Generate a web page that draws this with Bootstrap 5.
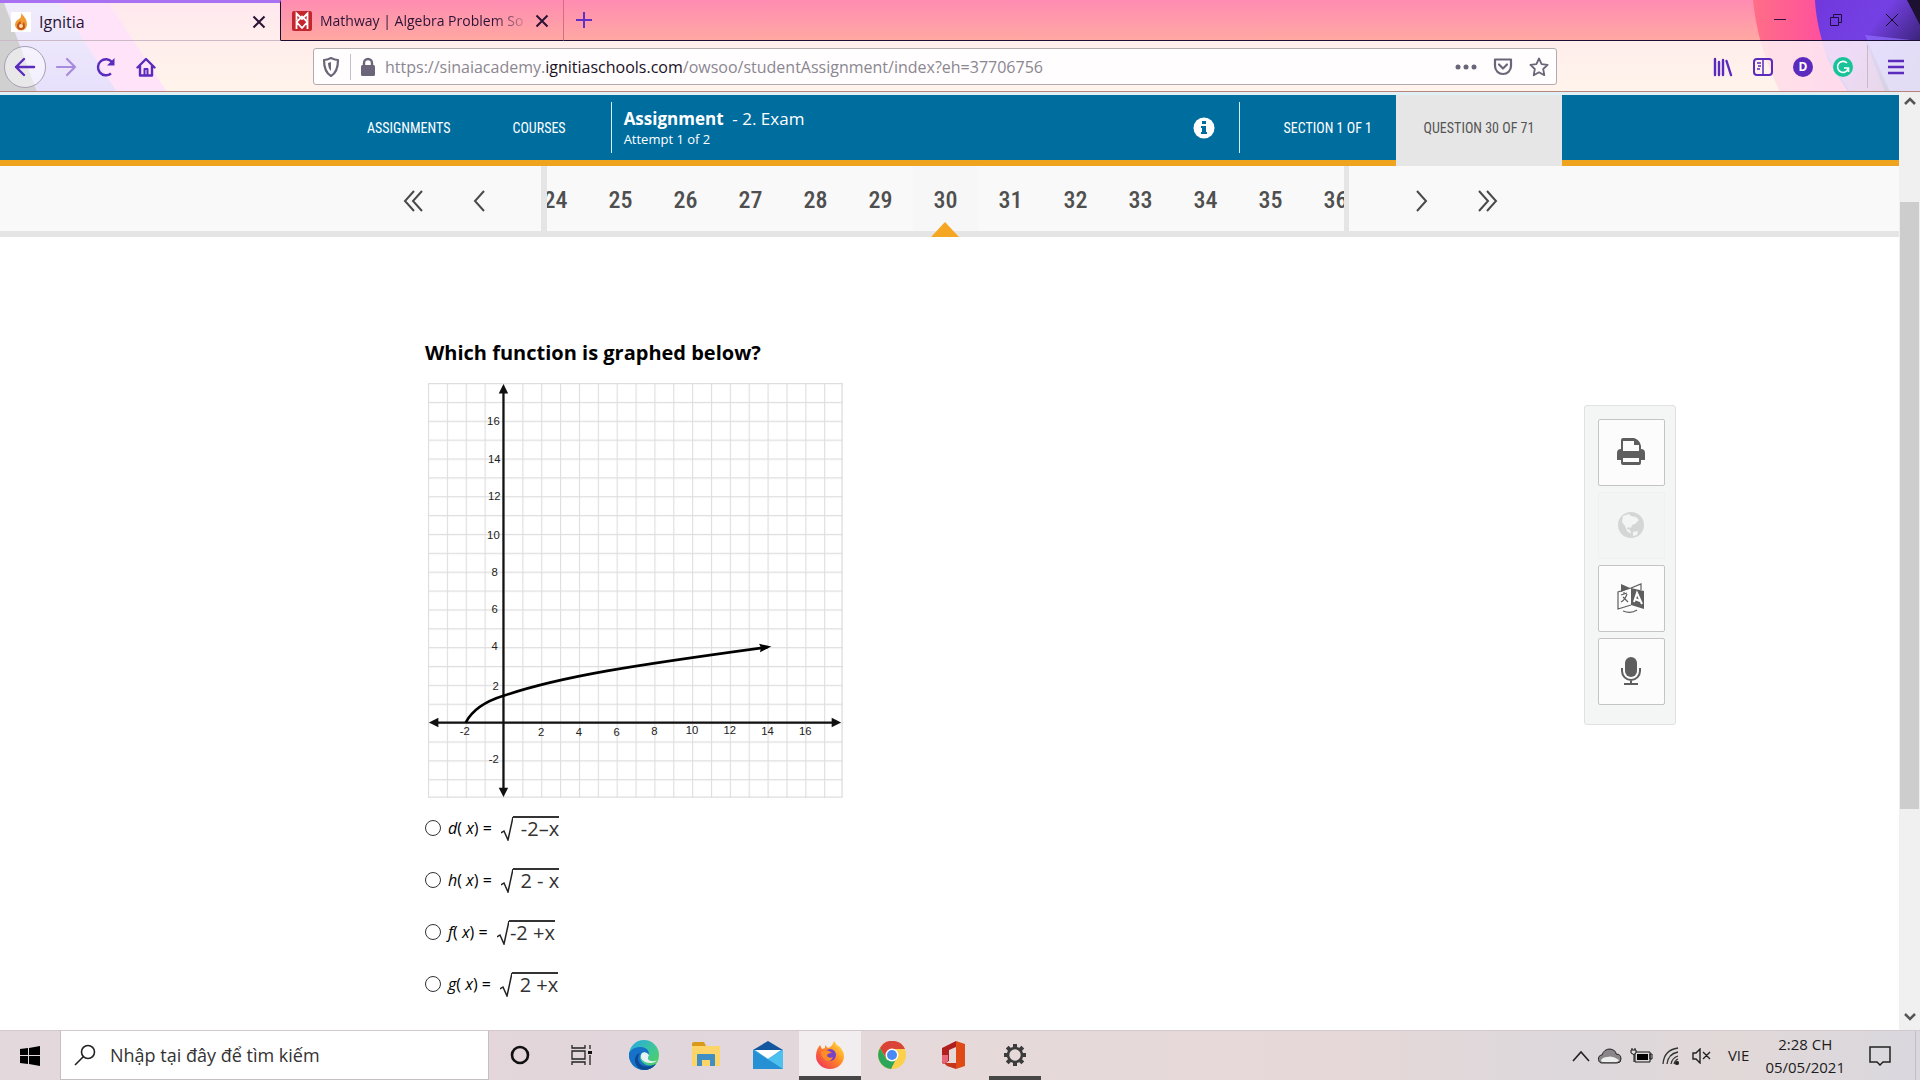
<!DOCTYPE html>
<html lang="en">
<head>
<meta charset="utf-8">
<meta name="viewport" content="width=device-width, initial-scale=1">
<title>Ignitia</title>
<link href="https://cdn.jsdelivr.net/npm/bootstrap@5.3.0/dist/css/bootstrap.min.css" rel="stylesheet">
<style>
  body { font-family: "Open Sans", "Noto Sans", sans-serif; font-size: 16px; line-height: 24px; color: #000; background: #fff; overflow: hidden; }
  svg { display: block; flex: none; }
  button { font: inherit; color: inherit; }
  .plain-btn { background: none; border: 0; padding: 0; display: flex; align-items: center; justify-content: center; }

  /* browser window */
  .chrome-top { background: linear-gradient(#ff8cb2, #ffa9a2 41px, #ffc79c 92px); border-bottom: 1px solid #b9837c; }
  .theme-art { inset: 0; width: 100%; height: 100%; overflow: hidden; }
  .theme-art svg { position: absolute; top: 0; }
  .tab-strip { height: 41px; }
  .tab-item { width: 283px; padding: 2px 14px 0 11px; font-size: 16px; border-bottom: 1px solid #1c0f33; border-right: 1px solid #d66c86; }
  .tab-item.current { width: 281px; padding-top: 0; background: rgba(255,255,255,.8); border-top: 3px solid #a871f2; border-bottom: 1px solid #cbb9c6; border-right: 1px solid #1c0f33; }
  .tab-title { white-space: nowrap; color: #2a1336; }
  .tab-title.fade-end { font-size: 14px; color: transparent; background: linear-gradient(90deg, #2a1336 85%, rgba(42,19,54,.2) 100%); -webkit-background-clip: text; background-clip: text; }
  .strip-rest { border-bottom: 1px solid #1c0f33; }
  .win-btn { width: 56px; height: 40px; }
  .tool-row { height: 50px; background: rgba(255,255,255,.8); color: #5a2bbd; padding: 1px 4px 0 4px; }
  .back-btn { width: 42px; height: 42px; border: 1px solid #a99fb4; border-radius: 50%; background: rgba(255,255,255,.5); }
  .tool-btn { width: 40px; height: 40px; }
  .url-box { height: 37px; border: 1px solid #b3aab0; border-radius: 3px; background: #fffdfd; color: #6c6478; padding: 0 7px 0 6px; margin-left: 147px; margin-right: 146px; }
  .url-rule { width: 1px; height: 26px; background: #c3bdc6; }
  .url-rule.tall { height: 43px; }
  .url-text { font-size: 16px; color: #8b8792; white-space: nowrap; }
  .url-text b { font-weight: 400; color: #1a1126; }

  /* page header */
  .app-head { height: 74px; background: #006d9f; border-top: 3px solid #dff0f7; border-bottom: 6px solid #eea41f; color: #fff; padding-left: 367px; padding-right: 337px; font-family: "Liberation Sans Narrow", "Roboto Condensed", "Liberation Sans", sans-serif; font-size: 14px; }
  .app-head a { color: #fff; text-decoration: none; }
  .courses-link { margin: 0 45px 0 62px; }
  .section-link { margin: 0 24px 0 44px; }
  .head-rule { width: 1px; height: 51px; background: #d9edf6; }
  .head-title { font-family: "Open Sans", sans-serif; font-size: 17px; line-height: 22px; }
  .head-title small { display: block; font-size: 13px; line-height: 18px; }
  .question-tab { background: #e6e6e6; color: #555; width: 166px; height: 71px; padding-bottom: 6px; margin-bottom: -6px; }

  /* question pager */
  .pager { height: 71px; background: #f9f9f9; border-bottom: 6px solid #e5e5e5; padding-left: 380px; color: #4a4a4a; }
  .pager-btn { width: 66px; height: 66px; padding-top: 4px; }
  .pager-window { position: relative; width: 808px; margin: 0 40px 0 29px; }
  .pager-list { border: solid #e5e5e5; border-width: 0 5px 0 6px; overflow: hidden; }
  .pager-list a { flex: 0 0 65px; text-align: center; font: 500 24px/61px "Liberation Sans Narrow", "Roboto Condensed", "Liberation Sans", sans-serif; height: 65px; padding-top: 4px; color: #4f4f4f; text-decoration: none; }
  .pager-list a.current { background: #f7f7f7; }
  .pager-mark { position: absolute; left: 50%; bottom: -6px; transform: translateX(-50%); }

  /* question */
  .question-area { padding: 103px 223px 0 425px; }
  .question-text { font-size: 20px; line-height: 26px; font-weight: 700; margin: 0 0 17px; }
  .graph { margin: 0 0 4px 3px; }
  .option-row { height: 52px; font-size: 16px; }
  .option-row input { appearance: none; width: 16px; height: 16px; margin: 0 7px 0 0; border: 1px solid #333; border-radius: 50%; background: #fff; }
  .option-row input:checked { background: radial-gradient(#333 40%, #fff 45%); }
  .option-row label { display: flex; align-items: center; white-space: pre; }
  .option-row svg { margin-left: 1px; }
  .root-arg { border-top: 2px solid #333; font: 20px/22px "Open Sans", sans-serif; height: 24px; color: #333; min-width: 46px; text-align: right; }
  .tool-box { background: #f4f5f5; border: 1px solid #e0e1e1; border-radius: 3px; width: 92px; height: 320px; padding: 13px 0 0 13px; margin-top: 65px; gap: 6px; }
  .tool-box button { width: 67px; height: 67px; background: #fcfcfc; border: 1px solid #c4c4c4; border-radius: 2px; color: #5e5e5e; padding: 0 2px 2px 0; }
  .tool-box button:disabled { background: #f3f4f4; border-color: #eff0f0; color: #d5d5d5; }

  /* scroll bar */
  .side-scroll { width: 21px; background: #f0f0f0; }
  .side-thumb { width: 19px; background: #cdcdcd; margin-top: 96px; height: 607px; }

  /* task bar */
  .task-bar { height: 50px; background: linear-gradient(90deg, #e3d8dc, #e4d6da 25%, #e0d6dc 35%, #e6d9da 50%, #e6d8d8 70%, #dcd8dc 82%, #e2d8d8 90%, #d9d8de); border-top: 1px solid #d3c9cc; }
  .start-btn { width: 60px; }
  .task-search { width: 429px; background: #fff; border: 1px solid #c4bfc2; border-top: 0; padding-left: 13px; }
  .task-search input { border: 0; outline: 0; background: none; font-size: 18px; color: #333; width: 340px; margin-left: 14px; padding: 0; }
  .task-search input::placeholder { color: #333; opacity: 1; }
  .task-btn { width: 62px; height: 49px; border-bottom: 4px solid transparent; padding-top: 3px; }
  .task-btn.open { background: #f2edef; border-bottom-color: #474747; }
  .task-btn.running { width: 52px; margin: 0 4px; border-bottom-color: #474747; }
  .tray-text { font-size: 15px; line-height: 23px; color: #1c1c1c; }
</style>
<script src="https://cdn.jsdelivr.net/npm/bootstrap@5.3.0/dist/js/bootstrap.bundle.min.js"></script>
</head>
<body>
<div class="vh-100 d-flex flex-column">

  <header class="chrome-top position-relative flex-shrink-0">
    <div class="theme-art position-absolute" aria-hidden="true">
      <svg class="start-0" width="260" height="92">
        <defs><linearGradient id="lav" x2="0" y2="1"><stop offset="0" stop-color="#b9a0ea"/><stop offset="1" stop-color="#8a66f0"/></linearGradient></defs>
        <path d="M107 0L167 92H100L50 0z" fill="#ff7ae0"/>
        <path d="M0 0H58L117 92H0z" fill="url(#lav)"/>
        <path d="M0 0H3L37 92H0z" fill="#18141c"/>
      </svg>
      <svg class="end-0" width="180" height="92">
        <defs>
          <linearGradient id="hot"><stop offset="0" stop-color="#ff6e86"/><stop offset=".5" stop-color="#ff4aa2"/><stop offset="1" stop-color="#ff49a0"/></linearGradient>
          <linearGradient id="vio" y2=".7"><stop offset="0" stop-color="#7138dc"/><stop offset=".5" stop-color="#7440e4"/><stop offset="1" stop-color="#2a1b58"/></linearGradient>
        </defs>
        <path d="M13 0Q17 45 40 92H180V0z" fill="url(#hot)"/>
        <path d="M75 0Q76 25 88 60L108 92H180V0z" fill="url(#vio)"/>
        <path d="M79 41L110 92H145L125 41z" fill="#e254c0" opacity=".5"/>
        <path d="M125 35L150 92H180V41z" fill="#8f6cff" opacity=".7"/>
        <path d="M167 0L180 25V0z" fill="#1c1130"/>
      </svg>
    </div>

    <div class="tab-strip d-flex position-relative">
      <div class="tab-item current d-flex align-items-center">
        <svg width="20" height="20" viewBox="0 0 20 20"><path d="M0 0h20v20H0z" fill="#fff"/><path d="M10 1q6 6 6 11a6 6 0 0 1-12 1q0-4 4-6 3-2 2-6z" fill="#f09a35"/><path d="M10 18a4 4 0 0 1-4-4q0-3 4-5-1 3 1 4l2-3q3 7-3 8z" fill="#c2521d"/><circle cx="10" cy="14" r="2" fill="#ffe1a8"/></svg>
        <span class="tab-title ps-2">Ignitia</span>
        <button class="plain-btn ms-auto" aria-label="Close tab"><svg width="14" height="14" viewBox="0 0 14 14"><path d="M1.500 1.500l11 11M12.500 1.500l-11 11" stroke="#2a1336" stroke-width="2"/></svg></button>
      </div>
      <div class="tab-item d-flex align-items-center">
        <svg width="20" height="20" viewBox="0 0 20 20"><rect width="20" height="20" rx="2" fill="#c4262e"/><path d="M4.500 9V2.500L10 8l5.500-5.500V9M4.500 18v-7L10 17l5.500-6v7M4.500 11L10 5.500 15.500 11" fill="none" stroke="#fff" stroke-width="1.800"/></svg>
        <span class="tab-title fade-end ms-2">Mathway | Algebra Problem So</span>
        <button class="plain-btn ms-auto" aria-label="Close tab"><svg width="14" height="14" viewBox="0 0 14 14"><path d="M1.500 1.500l11 11M12.500 1.500l-11 11" stroke="#2a1336" stroke-width="2"/></svg></button>
      </div>
      <div class="strip-rest d-flex flex-grow-1">
        <button class="plain-btn tool-btn" aria-label="New tab"><svg width="18" height="18" viewBox="0 0 18 18"><path d="M9 1v16M1 9h16" stroke="#5f2fc6" stroke-width="2"/></svg></button>
        <button class="plain-btn win-btn ms-auto" aria-label="Minimize"><svg width="14" height="14"><path d="M1 6.500h12" stroke="#301040"/></svg></button>
        <button class="plain-btn win-btn" aria-label="Restore"><svg width="14" height="14" fill="none" stroke="#1f0c40"><path d="M1.500 4.500h8v8h-8zM4.500 4V1.500h8v8H10"/></svg></button>
        <button class="plain-btn win-btn" aria-label="Close"><svg width="14" height="14"><path d="M1 1l12 12M13 1L1 13" stroke="#120826"/></svg></button>
      </div>
    </div>

    <div class="tool-row d-flex align-items-center position-relative">
      <button class="plain-btn back-btn" aria-label="Back"><svg width="22" height="20" viewBox="0 0 22 20" fill="none" stroke="currentColor" stroke-width="2.400" stroke-linecap="round" stroke-linejoin="round"><path d="M20 10H2M10 2l-8 8 8 8"/></svg></button>
      <button class="plain-btn tool-btn" aria-label="Forward"><svg width="22" height="20" viewBox="0 0 22 20" fill="none" stroke="#a78bdc" stroke-width="2.200" stroke-linecap="round" stroke-linejoin="round"><path d="M2 10h18M12 2l8 8-8 8"/></svg></button>
      <button class="plain-btn tool-btn" aria-label="Reload"><svg width="20" height="20" viewBox="0 0 20 20" fill="none" stroke="currentColor" stroke-width="2.400"><path d="M15 16.500A8 8 0 1 1 16 5"/><path d="M18.500 1v7.500H11z" fill="currentColor" stroke="none"/></svg></button>
      <button class="plain-btn tool-btn" aria-label="Home"><svg width="20" height="20" viewBox="0 0 20 20" fill="none" stroke="currentColor" stroke-width="2.400" stroke-linejoin="round" stroke-linecap="round"><path d="M1.500 10.500L10 2l8.500 8.500M4 9v9.500h12V9"/><path d="M8.500 18v-6h3v6" stroke-width="2"/></svg></button>

      <div class="url-box d-flex align-items-center flex-grow-1">
        <svg width="22" height="22" viewBox="0 0 22 22" fill="none" stroke="currentColor" stroke-width="2.200" stroke-linejoin="round"><path d="M11 2q4 2 7 2 0 12-7 16Q4 16 4 4q3 0 7-2z"/><path d="M11 6v9q-3-3-3-8z" fill="currentColor" stroke="none"/></svg>
        <span class="url-rule ms-2"></span>
        <svg class="ms-2" width="18" height="20" viewBox="0 0 18 20"><rect x="2" y="8" width="14" height="11" rx="1.500" fill="currentColor"/><path d="M5 9V6a4 4 0 0 1 8 0v3" fill="none" stroke="currentColor" stroke-width="2.400"/></svg>
        <span class="url-text ms-2 flex-grow-1">https://sinaiacademy.<b>ignitiaschools.com</b>/owsoo/studentAssignment/index?eh=37706756</span>
        <button class="plain-btn" aria-label="Page actions"><svg width="22" height="6" fill="currentColor"><circle cx="3" cy="3" r="2.500"/><circle cx="11" cy="3" r="2.500"/><circle cx="19" cy="3" r="2.500"/></svg></button>
        <button class="plain-btn ms-3" aria-label="Save to Pocket"><svg width="20" height="18" viewBox="0 0 20 18" fill="none" stroke="currentColor" stroke-width="2.200" stroke-linecap="round" stroke-linejoin="round"><path d="M2 1.500h16V8a8 8 0 0 1-16 0zM6 6.500l4 4 4-4"/></svg></button>
        <button class="plain-btn ms-3" aria-label="Bookmark"><svg width="20" height="20" viewBox="0 0 20 20" fill="none" stroke="currentColor" stroke-width="1.800" stroke-linejoin="round"><path d="M10 1.500l2.600 5.600 6 .7-4.400 4.200 1.100 6.200L10 15.200l-5.300 3 1.100-6.200L1.400 7.800l6-.7z"/></svg></button>
      </div>

      <button class="plain-btn tool-btn" aria-label="Library"><svg width="20" height="20" viewBox="0 0 20 20" stroke="currentColor" stroke-width="2.400" stroke-linecap="round"><path d="M2 2v16M6 5v13M10 3v15M13.500 4l4.500 14"/></svg></button>
      <button class="plain-btn tool-btn" aria-label="Sidebars"><svg width="20" height="18" viewBox="0 0 20 18" fill="none" stroke="currentColor" stroke-width="2"><rect x="1" y="1" width="18" height="16" rx="3"/><path d="M10 1v16M4 5h4M5 8h3M4 11h3" stroke-width="1.500"/></svg></button>
      <button class="plain-btn tool-btn" aria-label="Account"><svg width="20" height="20" viewBox="0 0 20 20"><circle cx="10" cy="10" r="10" fill="currentColor"/><text x="10" y="14" text-anchor="middle" font-size="12" font-weight="700" fill="#fff">D</text></svg></button>
      <button class="plain-btn tool-btn" aria-label="Grammarly"><svg width="20" height="20" viewBox="0 0 20 20"><circle cx="10" cy="10" r="10" fill="#19c39a"/><path d="M14 6a5.500 5.500 0 1 0 1.300 5.500M11 11h4.500v4" fill="none" stroke="#fff" stroke-width="1.600"/></svg></button>
      <span class="url-rule tall ms-1"></span>
      <button class="plain-btn tool-btn ms-2" aria-label="Menu"><svg width="16" height="16" stroke="currentColor" stroke-width="2.400"><path d="M0 2h16M0 8h16M0 14h16"/></svg></button>
    </div>
  </header>

  <div class="d-flex flex-grow-1 overflow-hidden">
    <div class="flex-grow-1 overflow-hidden">
      <nav class="app-head d-flex align-items-center">
        <a href="#">ASSIGNMENTS</a>
        <a href="#" class="courses-link">COURSES</a>
        <span class="head-rule"></span>
        <div class="head-title ms-2 ps-1"><strong>Assignment</strong> &nbsp;- 2. Exam<small>Attempt 1 of 2</small></div>
        <button class="plain-btn ms-auto" aria-label="Information"><svg width="22" height="22" viewBox="0 0 22 22"><circle cx="11" cy="11" r="10.500" fill="#fff"/><path d="M9 4h4v3H9zM8 9h5v6h1v2H8v-2h1v-4H8z" fill="#006d9f"/></svg></button>
        <span class="head-rule ms-4"></span>
        <a href="#" class="section-link">SECTION 1 OF 1</a>
        <div class="question-tab d-flex align-items-center justify-content-center align-self-start">QUESTION 30 OF 71</div>
      </nav>

      <nav class="pager d-flex" aria-label="Questions">
        <button class="plain-btn pager-btn" aria-label="First"><svg width="20" height="22" fill="none" stroke="currentColor" stroke-width="2"><path d="M11 1L2 11l9 10M19 1l-9 10 9 10"/></svg></button>
        <button class="plain-btn pager-btn" aria-label="Previous"><svg width="12" height="22" fill="none" stroke="currentColor" stroke-width="2"><path d="M11 1L2 11l9 10"/></svg></button>
        <div class="pager-window">
          <div class="pager-list d-flex justify-content-center">
            <a href="#">24</a><a href="#">25</a><a href="#">26</a><a href="#">27</a><a href="#">28</a><a href="#">29</a><a href="#" class="current">30</a><a href="#">31</a><a href="#">32</a><a href="#">33</a><a href="#">34</a><a href="#">35</a><a href="#">36</a>
          </div>
          <svg class="pager-mark" width="28" height="15"><path d="M0 15L14 0l14 15z" fill="#f5a623"/></svg>
        </div>
        <button class="plain-btn pager-btn" aria-label="Next"><svg width="12" height="22" fill="none" stroke="currentColor" stroke-width="2"><path d="M1 1l9 10-9 10"/></svg></button>
        <button class="plain-btn pager-btn" aria-label="Last"><svg width="20" height="22" fill="none" stroke="currentColor" stroke-width="2"><path d="M1 1l9 10-9 10M9 1l9 10-9 10"/></svg></button>
      </nav>

      <main class="question-area d-flex justify-content-between align-items-start">
        <form>
          <h1 class="question-text">Which function is graphed below?</h1>
          <svg class="graph" width="415" height="415" viewBox="0 0 440 440" role="img" aria-label="Square root curve starting at (-2, 0)">
            <defs><pattern id="cells" width="20" height="20" patternUnits="userSpaceOnUse"><path d="M0 0H20M0 0V20" stroke="#dedede" stroke-width="2.400" fill="none"/></pattern></defs>
            <rect width="440" height="440" fill="url(#cells)"/>
            <path d="M439 0V439H0" fill="none" stroke="#dedede" stroke-width="1.400"/>
            <g stroke="#111" stroke-width="2.400" fill="#111">
              <path d="M6 360H434M80 6V434"/>
              <path stroke="none" d="M1 360l10-5v10zM438 360l-10-5v10zM80 1l-5 10h10zM80 439l-5-10h10z"/>
            </g>
            <path d="M40 360C48 345 66 336 80 331.700C140 311 220 299 360 280" fill="none" stroke="#000" stroke-width="2.800"/>
            <path d="M364 279.500l-13-3 2 4-1 5z"/>
            <g font-family="Liberation Sans, sans-serif" font-size="12" fill="#222" text-anchor="end">
              <text x="76" y="45">16</text><text x="77" y="85">14</text><text x="77" y="124">12</text><text x="76" y="165">10</text><text x="74" y="205">8</text><text x="74" y="244">6</text><text x="74" y="283">4</text><text x="75" y="325">2</text><text x="75" y="403">-2</text>
            </g>
            <g font-family="Liberation Sans, sans-serif" font-size="12" fill="#222" text-anchor="middle">
              <text x="39" y="373">-2</text><text x="120" y="374">2</text><text x="160" y="374">4</text><text x="200" y="374">6</text><text x="240" y="373">8</text><text x="280" y="372">10</text><text x="320" y="372">12</text><text x="360" y="373">14</text><text x="400" y="373">16</text>
            </g>
          </svg>
          <div class="option-row d-flex align-items-center"><input type="radio" name="answer" id="opt-d"><label for="opt-d"><i>d</i>( <i>x</i>) =  <svg width="12" height="25" fill="none" stroke="#222" stroke-width="1.500"><path d="M0 17l3-2 4 9L12 1"/></svg><span class="root-arg">-2–x</span></label></div>
          <div class="option-row d-flex align-items-center"><input type="radio" name="answer" id="opt-h"><label for="opt-h"><i>h</i>( <i>x</i>) =  <svg width="12" height="25" fill="none" stroke="#222" stroke-width="1.500"><path d="M0 17l3-2 4 9L12 1"/></svg><span class="root-arg">2 - x</span></label></div>
          <div class="option-row d-flex align-items-center"><input type="radio" name="answer" id="opt-f"><label for="opt-f"><i>f</i>( <i>x</i>) =  <svg width="12" height="25" fill="none" stroke="#222" stroke-width="1.500"><path d="M0 17l3-2 4 9L12 1"/></svg><span class="root-arg">-2 +x</span></label></div>
          <div class="option-row d-flex align-items-center"><input type="radio" name="answer" id="opt-g"><label for="opt-g"><i>g</i>( <i>x</i>) =  <svg width="12" height="25" fill="none" stroke="#222" stroke-width="1.500"><path d="M0 17l3-2 4 9L12 1"/></svg><span class="root-arg">2 +x</span></label></div>
        </form>

        <div class="tool-box d-flex flex-column">
          <button class="plain-btn" type="button" aria-label="Print"><svg width="28" height="27" viewBox="0 0 28 27" fill="currentColor"><path fill-rule="evenodd" d="M4 2q0-2 2-2h11q6 2 7 8v3q4 0 4 4v7h-4v3q0 2-2 2H6q-2 0-2-2v-3H0v-7q0-4 4-4zM6 3v10h16V7h-5V3zM6 20v4h16v-4z"/></svg></button>
          <button class="plain-btn" type="button" aria-label="Web" disabled><svg width="26" height="26" viewBox="0 0 26 26"><circle cx="13" cy="13" r="13" fill="currentColor"/><path d="M5 4l6-2 2 2 5 1 3 3-4 4-3 1-1 3-3-1-1 2 3 1 1 4-4-3-2-5-3-4zM15 20l5-1-1 4-4 1z" fill="#f3f4f4"/></svg></button>
          <button class="plain-btn" type="button" aria-label="Translate"><svg width="28" height="30" viewBox="0 0 28 30"><path d="M4 1l9 4-9 4zM14 5l13 3v18l-13-4z" fill="currentColor"/><path d="M14 5L1 9v17l13-4M14 5l10-4v6M6 28q8 3 14-1M4 12l6-2M7 9v2M10 11q-2 6-6 8M6 14l5 5" fill="none" stroke="currentColor" stroke-width="1.200"/><path d="M17 19l3-9 5 11M18 16l5 2" fill="none" stroke="#fff" stroke-width="2"/></svg></button>
          <button class="plain-btn" type="button" aria-label="Microphone"><svg width="20" height="30" viewBox="0 0 20 30"><rect x="4" y="1" width="12" height="20" rx="6" fill="currentColor"/><path d="M1 12v3a9 9 0 0 0 18 0v-3M10 24v4M3 28h14" fill="none" stroke="currentColor" stroke-width="2"/></svg></button>
        </div>
      </main>
    </div>

    <div class="side-scroll flex-shrink-0 d-flex flex-column align-items-center" aria-hidden="true">
      <svg class="mt-1" width="12" height="10" fill="none" stroke="#555" stroke-width="2.500"><path d="M1 8l5-5 5 5"/></svg>
      <div class="side-thumb"></div>
      <svg class="mt-auto mb-2" width="12" height="10" fill="none" stroke="#555" stroke-width="2.500"><path d="M1 2l5 5 5-5"/></svg>
    </div>
  </div>

  <footer class="task-bar d-flex flex-shrink-0">
    <button class="plain-btn start-btn" aria-label="Start"><svg width="20" height="20" viewBox="0 0 20 20"><path d="M0 3l8-1v7H0zM9 2l11-2v9H9zM0 10h8v8l-8-1zM9 10h11v10L9 18z"/></svg></button>
    <div class="task-search d-flex align-items-center">
      <svg width="22" height="22" fill="none" stroke="#222" stroke-width="1.600"><circle cx="14" cy="8" r="6.500"/><path d="M9.500 12.500L1 21"/></svg>
      <input type="text" placeholder="Nhập tại đây để tìm kiếm" aria-label="Nhập tại đây để tìm kiếm">
    </div>
    <button class="plain-btn task-btn" aria-label="Cortana"><svg width="20" height="20"><circle cx="10" cy="10" r="8" fill="none" stroke="#111" stroke-width="2.600"/></svg></button>
    <button class="plain-btn task-btn" aria-label="Task view"><svg width="22" height="20" fill="none" stroke="#222" stroke-width="1.300"><path d="M1 0v3h13V0M1 6h13v8H1zM1 20v-3h13v3M19 0v4M19 10v10"/><path d="M17 6h4v3h-4z" fill="#111" stroke="none"/></svg></button>
    <button class="plain-btn task-btn" aria-label="Edge"><svg width="30" height="30" viewBox="0 0 30 30"><defs><linearGradient id="edgeA" y2="1"><stop offset="0" stop-color="#23a8e8"/><stop offset=".6" stop-color="#41c98e"/><stop offset="1" stop-color="#59cf50"/></linearGradient></defs><circle cx="15" cy="15" r="15" fill="url(#edgeA)"/><path d="M0 13Q4 6 13 7q7 1 7 8-3-4-7-2-4 4 0 9 6 6 14 2-5 6-12 6A15 15 0 0 1 0 13z" fill="#1672c8"/><path d="M11 13q-4 6 0 11 6 5 16 0-5 6-12 6Q8 29 6 22q-1-7 5-9z" fill="#0c4a94"/><path d="M13 13q4-2 7 2-3 5 2 6 3 1 6-1-2 3-6 3-8 0-10-5-1-3 1-5z" fill="#e6f2f6"/></svg></button>
    <button class="plain-btn task-btn" aria-label="File Explorer"><svg width="28" height="26" viewBox="0 0 28 26"><path d="M0 2q0-2 2-2h10l2 4H0z" fill="#d89a18"/><path d="M0 4h28v20H0z" fill="#fcd468"/><path d="M5 24V13q0-1 1-1h16q1 0 1 1v11h-5v-6h-8v6z" fill="#3f8fc4"/></svg></button>
    <button class="plain-btn task-btn" aria-label="Mail"><svg width="30" height="28" viewBox="0 0 30 28"><path d="M0 9L15 0l15 9v3H0z" fill="#12569f"/><path d="M0 9h30v19H0z" fill="#39a8e0"/><path d="M2 9h26L15 18z" fill="#fff"/><path d="M0 9l30 19H0z" fill="#2590d4"/><path d="M30 9v19L15 18z" fill="#4cc0ee"/></svg></button>
    <button class="plain-btn task-btn open" aria-label="Firefox"><svg width="28" height="28" viewBox="0 0 28 28"><defs><linearGradient id="ffx" x1="1" x2="0" y2="1"><stop offset="0" stop-color="#fff04a"/><stop offset=".45" stop-color="#ff8a24"/><stop offset="1" stop-color="#ee2560"/></linearGradient></defs><path d="M4 4l2 4 3-1V4l3 3q4-1 6-7 2 4 6 6 4 5 4 9a14 13 0 0 1-28 0Q0 9 4 4z" fill="url(#ffx)"/><circle cx="14" cy="14" r="6" fill="#7542c8"/><path d="M5 11q5-3 8-1l3 2q-5 0-5 3 2 3 6 1-3 7-9 2-3-3-3-7z" fill="#ff8c27"/></svg></button>
    <button class="plain-btn task-btn" aria-label="Chrome"><svg width="28" height="28" viewBox="0 0 28 28"><circle cx="14" cy="14" r="14" fill="#fcd04b"/><path d="M2 7a14 14 0 0 1 25 1H14l-6 9z" fill="#da4437"/><path d="M2 7l7 12 9-1-5 10A14 14 0 0 1 2 7z" fill="#2da55a"/><circle cx="14" cy="14" r="6.500" fill="#fff"/><circle cx="14" cy="14" r="5" fill="#4a8af4"/></svg></button>
    <button class="plain-btn task-btn" aria-label="Office"><svg width="24" height="28" viewBox="0 0 24 28"><path d="M14 0l9 3v22l-9 3z" fill="#e04a16"/><path d="M14 0v6L7 9v11l-5 3-2-1V7z" fill="#b01e1e"/><path d="M0 20l5 2h9v6l-9-3z" fill="#c4351c"/><path d="M0 14h6v6l-4 3-2-2z" fill="#e8667a"/></svg></button>
    <button class="plain-btn task-btn running" aria-label="Settings"><svg width="24" height="24" viewBox="0 0 24 24" fill="none" stroke="#3c3c3c"><circle cx="12" cy="12" r="7" stroke-width="2.600"/><g stroke-width="4"><path d="M12 1v4M12 19v4M1 12h4M19 12h4M4.200 4.200L7 7M17 17l2.800 2.800M19.800 4.200L17 7M7 17l-2.800 2.800"/></g></svg></button>

    <div class="d-flex align-items-center ms-auto tray-text">
      <svg width="18" height="12" fill="none" stroke="#222" stroke-width="1.600"><path d="M1 11l8-9 8 9"/></svg>
      <svg class="ms-2 me-2" width="24" height="16"><path d="M5 15a4 4 0 0 1-1-8q2-6 8-6 6 1 6 5 5 0 5 5 0 4-4 4z" fill="#8a8588" stroke="#222"/><path d="M3 12q2-3 6-3 6-2 12 3-1 2-3 2H5q-2 0-2-2z" fill="#eee"/></svg>
      <svg class="me-2" width="24" height="16"><path d="M5 4h15v10H5zM20 6h2v5h-2z" fill="none" stroke="#111"/><path d="M7 6h11v6H7z"/><path d="M1 2h5v3q-2 3-5 0zM2 0v2M5 0v2M4 6v8" fill="#ddd" stroke="#111"/></svg>
      <svg class="me-2" width="18" height="18" fill="none" stroke="#333" stroke-width="1.300"><path d="M1 17Q2 3 16 1M5 17Q6 7 16 5M9 17q1-6 7-8M12 17q1-4 4-5"/><circle cx="15" cy="16" r="1.500" fill="#111"/></svg>
      <svg class="ms-1" width="20" height="16" fill="none" stroke="#222" stroke-width="1.400"><path d="M1 5h3l4-4v14l-4-4H1zM11 4l7 7M18 4l-7 7"/></svg>
      <span class="ms-3">VIE</span>
      <div class="text-center ms-3">2:28 CH<br>05/05/2021</div>
      <svg class="ms-4" width="22" height="20" fill="none" stroke="#222" stroke-width="1.500"><path d="M1 1h20v15h-7l-3 3-3-3H1z"/></svg>
      <span class="url-rule ms-4 me-1 h-100"></span>
    </div>
  </footer>
</div>
</body>
</html>
